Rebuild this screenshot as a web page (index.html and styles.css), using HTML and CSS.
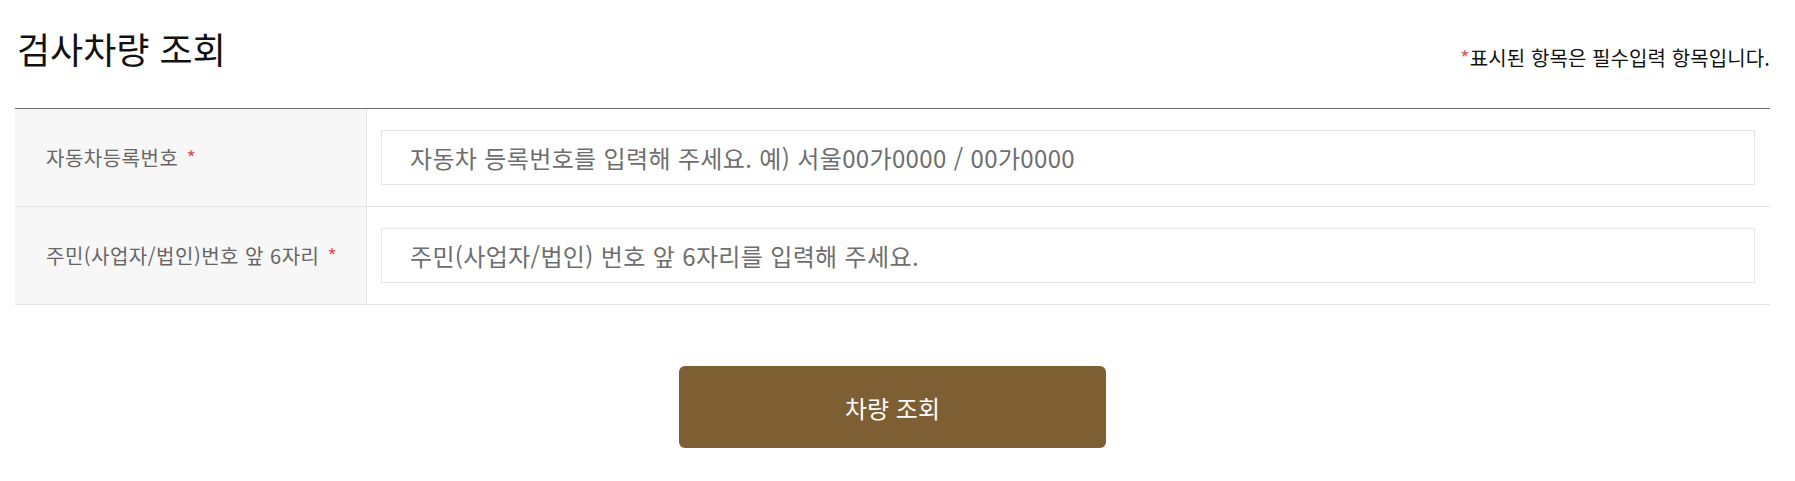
FILE: index.html
```html
<!DOCTYPE html>
<html lang="ko">
<head>
<meta charset="utf-8">
<title>검사차량 조회</title>
<link rel="stylesheet" href="styles.css">
</head>
<body>
<div class="page">
  <div class="head">
    <h2 class="title">검사차량 조회</h2>
    <p class="req-note"><span class="star">*</span>표시된 항목은 필수입력 항목입니다.</p>
  </div>
  <div class="form-table">
    <div class="row">
      <div class="label">자동차등록번호 <span class="star">*</span></div>
      <div class="field"><input class="input" type="text" placeholder="자동차 등록번호를 입력해 주세요. 예) 서울00가0000 / 00가0000"></div>
    </div>
    <div class="row">
      <div class="label">주민(사업자/법인)번호 앞 6자리 <span class="star">*</span></div>
      <div class="field"><input class="input" type="text" placeholder="주민(사업자/법인) 번호 앞 6자리를 입력해 주세요."></div>
    </div>
  </div>
  <div class="actions">
    <button class="btn" type="button">차량 조회</button>
  </div>
</div>
</body>
</html>
```

FILE: styles.css
```css
* { box-sizing: border-box; }
body {
  margin: 0;
  background: #fff;
  font-family: "Noto Sans CJK KR", "Noto Sans", sans-serif;
}
.page {
  padding: 0 25px 0 15px;
}
.head {
  display: flex;
  justify-content: space-between;
  align-items: flex-start;
  height: 108px;
}
.title {
  margin: 30px 0 0;
  font-size: 36px;
  font-weight: 400;
  color: #111;
  letter-spacing: 0;
  line-height: 1;
  padding-left: 2px;
}
.req-note {
  margin: 48px 0 0;
  font-size: 20px;
  color: #111;
  line-height: 1;
  letter-spacing: 0.1px;
}
.star { color: #e05555; }
.form-table {
  border-top: 1px solid #6b6b6b;
}
.row {
  display: flex;
  border-bottom: 1px solid #e3e3e3;
  height: 98px;
}
.label {
  width: 352px;
  flex: none;
  background: #f7f7f7;
  border-right: 1px solid #e3e3e3;
  display: flex;
  align-items: center;
  padding-left: 31px;
  font-size: 20px;
  color: #666;
  letter-spacing: 0.5px;
  white-space: pre;
}
.label .star { margin-left: 2px; }
.field {
  flex: 1;
  display: flex;
  align-items: center;
  padding: 0 15px 0 14px;
}
.input {
  width: 100%;
  height: 55px;
  border: 1px solid #e5e5e5;
  padding: 0 28px;
  font-family: "Noto Sans CJK KR", "Noto Sans", sans-serif;
  font-size: 24px;
  letter-spacing: 0.35px;
  color: #333;
  outline: none;
  background: #fff;
}
.input::placeholder { color: #6e6e6e; opacity: 1; }
.actions {
  display: flex;
  justify-content: center;
  padding-top: 61px;
}
.btn {
  width: 427px;
  height: 82px;
  border: 0;
  border-radius: 6px;
  background: #7e5e33;
  color: #fff;
  font-family: "Noto Sans CJK KR", "Noto Sans", sans-serif;
  font-size: 24px;
  cursor: pointer;
}
```
